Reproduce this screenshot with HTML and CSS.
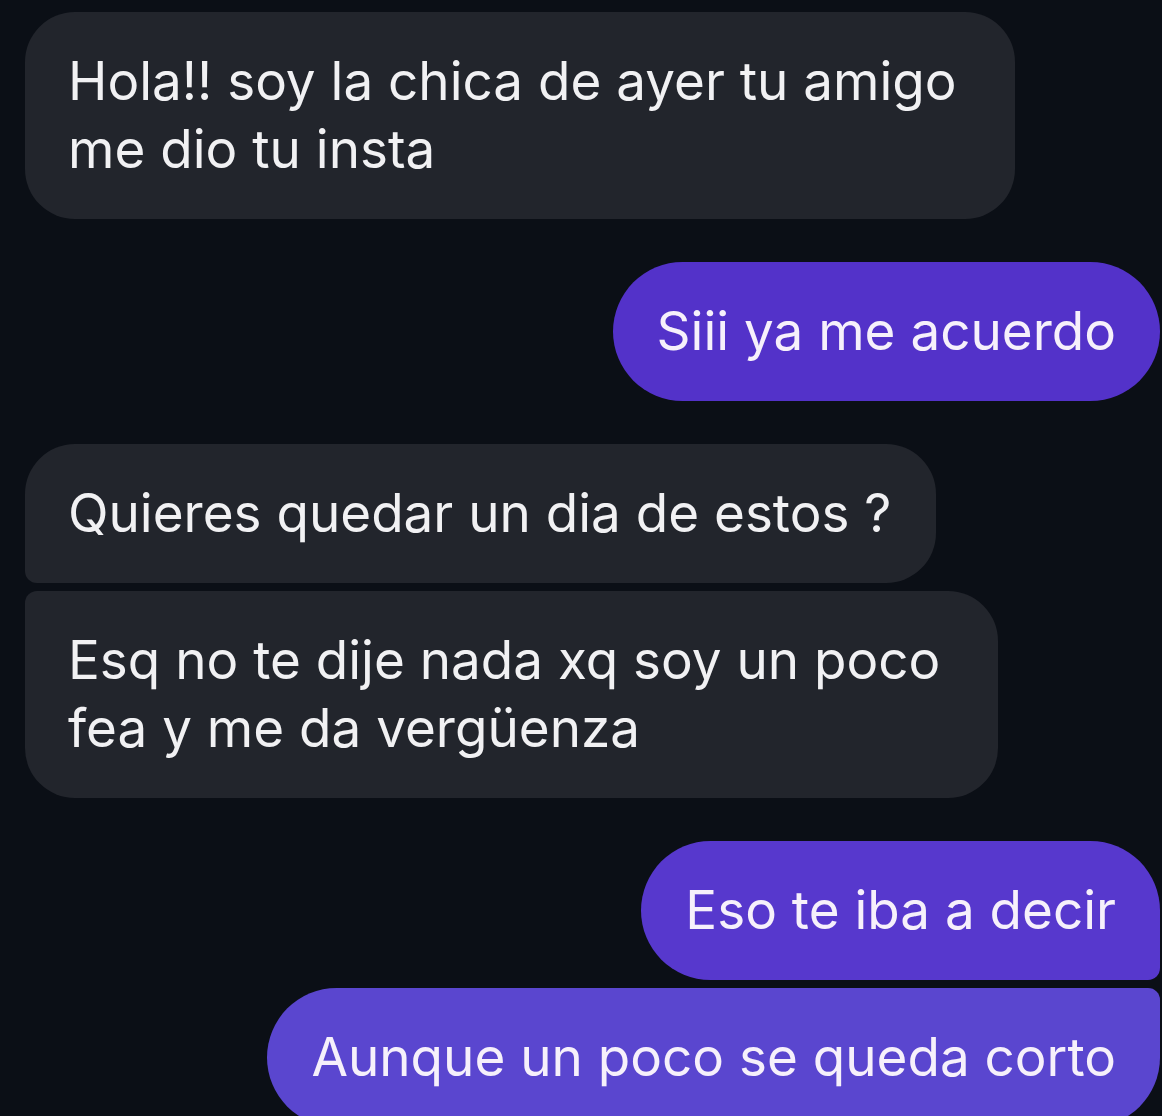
FILE: index.html
```html
<!DOCTYPE html>
<html lang="es">
<head>
	<meta charset="UTF-8">
	<title>Chat</title>
	<link rel="stylesheet" href="styles.css">
</head>
<body>
	<div id="chat">
		<div class="msg in wide">Hola!! soy la chica de ayer tu amigo<br>me dio tu insta</div>
		<div class="msg out gap">Siii ya me acuerdo</div>
		<div class="msg in gap first">Quieres quedar un dia de estos ?</div>
		<div class="msg in wide last">Esq no te dije nada xq soy un poco<br>fea y me da vergüenza</div>
		<div class="msg out gap first">Eso te iba a decir</div>
		<div class="msg out last lower">Aunque un poco se queda corto</div>
	</div>
</body>
</html>
```

FILE: styles.css
```css
*{
	margin: 0;
	padding: 0;
	box-sizing: border-box;
}
html, body{
	height: 100%;
	overflow: hidden;
}
body{
	background: #0b0f16;
	font-family: Inter, "Liberation Sans", sans-serif;
}
#chat{
	display: flex;
	flex-direction: column;
	padding: 12px 2px 0 25px;
}
.msg{
	font-size: 53px;
	line-height: 68px;
	padding: 35px 45px 36px 43px;
	border-radius: 50px;
	color: #f1f1f3;
	margin-top: 8px;
	white-space: nowrap;
}
.msg:first-child{
	margin-top: 0;
}
.msg.gap{
	margin-top: 43px;
}
.msg.in{
	align-self: flex-start;
	background: #22252c;
}
.msg.wide{
	padding-right: 58px;
}
.msg.in.first{
	border-bottom-left-radius: 12px;
}
.msg.in.last{
	border-top-left-radius: 12px;
}
.msg.out{
	align-self: flex-end;
	background: #5332c9;
	color: #f6f0fb;
	border-radius: 70px;
	padding-left: 44px;
	padding-right: 44px;
}
.msg.out.first{
	border-bottom-right-radius: 12px;
	background: #5738cd;
}
.msg.out.last{
	border-top-right-radius: 12px;
}
.msg.out.lower{
	background: #5a46cf;
}
```
